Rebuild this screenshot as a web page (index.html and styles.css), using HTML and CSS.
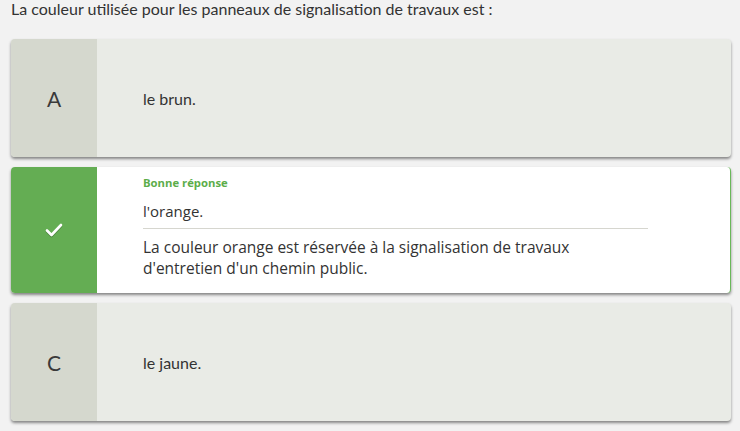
FILE: index.html
```html
<!DOCTYPE html>
<html>
<head>
  <title>Question</title>
  <link rel="stylesheet" href="styles.css">
</head>
<body>
  <div class="quiz">
    <p class="question">La couleur utilisée pour les panneaux de signalisation de travaux est :</p>

    <div class="answer">
      <div class="letter">A</div>
      <div class="answer-text">le brun.</div>
    </div>

    <div class="answer correct">
      <div class="letter">
        <svg width="18" height="14" viewBox="0 0 18 14">
          <polyline points="2,7.5 6.5,12 16,2" fill="none" stroke="#fff" stroke-width="2.6" stroke-linecap="round" stroke-linejoin="round"/>
        </svg>
      </div>
      <div class="answer-body">
        <div class="label">Bonne réponse</div>
        <div class="choice">l'orange.</div>
        <div class="explanation">La couleur orange est réservée à la signalisation de travaux d'entretien d'un chemin public.</div>
      </div>
    </div>

    <div class="answer">
      <div class="letter">C</div>
      <div class="answer-text">le jaune.</div>
    </div>
  </div>
</body>
</html>
```

FILE: styles.css
```css
body {
  margin: 0;
  background-color: #f2f2f2;
  font-family: Lato, "Liberation Sans", sans-serif;
  color: #333333;
}

.quiz {
  padding: 0 9px 0 11px;
}

.question {
  margin: 0 0 21px;
  font-size: 16px;
  line-height: 18px;
}

.answer {
  display: flex;
  min-height: 118px;
  margin-bottom: 10px;
  background-color: #e9ebe6;
  border-radius: 4px;
  box-shadow: 0 2px 3px rgba(0, 0, 0, 0.45);
  overflow: hidden;
}

.letter {
  width: 86px;
  flex-shrink: 0;
  display: flex;
  align-items: center;
  justify-content: center;
  background-color: #d5d8ce;
  font-size: 21px;
  color: #3a3a3a;
}

.answer-text {
  display: flex;
  align-items: center;
  padding-left: 46px;
  font-size: 16px;
}

.correct {
  min-height: 0;
  background-color: #ffffff;
  border-right: 1px solid #6ab85a;
}

.correct .letter {
  background-color: #64ad53;
}

.correct .letter svg {
  filter: drop-shadow(0 1px 0 rgba(0, 0, 0, 0.25));
}

.answer-body {
  flex: 1;
  padding: 8px 82px 14px 46px;
  font-family: "Open Sans", "DejaVu Sans", sans-serif;
}

.label {
  font-size: 11.3px;
  font-weight: bold;
  line-height: 16px;
  color: #5cad4a;
}

.choice {
  margin-top: 9px;
  font-size: 15px;
  line-height: 22px;
  padding-bottom: 6px;
  border-bottom: 1px solid #d6d6cf;
}

.explanation {
  margin-top: 8px;
  font-size: 15.5px;
  line-height: 21px;
}
```
